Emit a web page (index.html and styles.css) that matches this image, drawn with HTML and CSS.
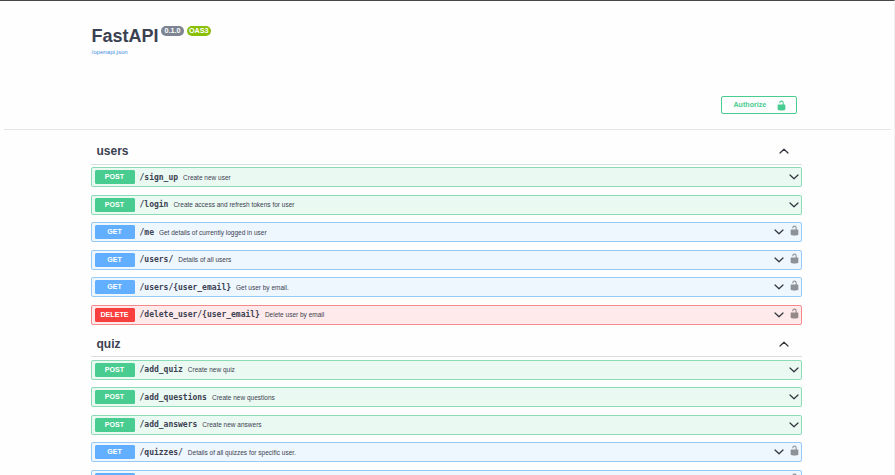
FILE: index.html
```html
<!DOCTYPE html>
<html lang="en">
<head>
<meta charset="utf-8">
<title>FastAPI - Swagger UI</title>
<link rel="stylesheet" href="styles.css">
</head>
<body>
<svg class="defs" aria-hidden="true">
  <symbol id="lock" viewBox="0 0 20 20"><path d="M15.8 8H14V5.6C14 2.703 12.665 1 10 1 7.334 1 6 2.703 6 5.6V6h2v-.801C8 3.754 8.797 3 10 3c1.203 0 2 .754 2 2.199V8H4c-.553 0-1 .646-1 1.199V17c0 .549.428 1.139.951 1.307l1.197.387C5.672 18.861 6.55 19 7.1 19h5.8c.549 0 1.428-.139 1.951-.307l1.196-.387c.524-.167.953-.757.953-1.306V9.199C17 8.646 16.352 8 15.8 8z"/></symbol>
  <symbol id="down" viewBox="0 0 10 10"><path d="M1 3 5 6.8 9 3" fill="none" stroke="currentColor" stroke-width="1.2" stroke-linecap="round" stroke-linejoin="round"/></symbol>
</svg>
<header class="info">
  <h1 class="title">FastAPI<span class="version">0.1.0</span><span class="version oas">OAS3</span></h1>
  <a class="spec">/openapi.json</a>
</header>
<div class="schemes"><button class="authorize">Authorize<svg><use href="#lock"/></svg></button></div>
<main class="wrapper">
  <section class="group">
    <h2 class="tag">users<svg class="arrow up"><use href="#down"/></svg></h2>
    <div class="op post"><span class="method">POST</span><span class="path">/sign_up</span><span class="desc">Create new user</span><svg class="arrow"><use href="#down"/></svg></div>
    <div class="op post"><span class="method">POST</span><span class="path">/login</span><span class="desc">Create access and refresh tokens for user</span><svg class="arrow"><use href="#down"/></svg></div>
    <div class="op get"><span class="method">GET</span><span class="path">/me</span><span class="desc">Get details of currently logged in user</span><svg class="arrow"><use href="#down"/></svg><svg class="lock"><use href="#lock"/></svg></div>
    <div class="op get"><span class="method">GET</span><span class="path">/users/</span><span class="desc">Details of all users</span><svg class="arrow"><use href="#down"/></svg><svg class="lock"><use href="#lock"/></svg></div>
    <div class="op get"><span class="method">GET</span><span class="path">/users/{user_email}</span><span class="desc">Get user by email.</span><svg class="arrow"><use href="#down"/></svg><svg class="lock"><use href="#lock"/></svg></div>
    <div class="op delete"><span class="method">DELETE</span><span class="path">/delete_user/{user_email}</span><span class="desc">Delete user by email</span><svg class="arrow"><use href="#down"/></svg><svg class="lock"><use href="#lock"/></svg></div>
  </section>
  <section class="group">
    <h2 class="tag">quiz<svg class="arrow up"><use href="#down"/></svg></h2>
    <div class="op post"><span class="method">POST</span><span class="path">/add_quiz</span><span class="desc">Create new quiz</span><svg class="arrow"><use href="#down"/></svg></div>
    <div class="op post"><span class="method">POST</span><span class="path">/add_questions</span><span class="desc">Create new questions</span><svg class="arrow"><use href="#down"/></svg></div>
    <div class="op post"><span class="method">POST</span><span class="path">/add_answers</span><span class="desc">Create new answers</span><svg class="arrow"><use href="#down"/></svg></div>
    <div class="op get"><span class="method">GET</span><span class="path">/quizzes/</span><span class="desc">Details of all quizzes for specific user.</span><svg class="arrow"><use href="#down"/></svg><svg class="lock"><use href="#lock"/></svg></div>
    <div class="op get"><span class="method"></span><svg class="arrow"><use href="#down"/></svg><svg class="lock"><use href="#lock"/></svg></div>
  </section>
</main>
</body>
</html>
```
FILE: styles.css
```css
* { box-sizing: border-box; }
body {
  margin: 0;
  height: 475px;
  overflow: hidden;
  border-top: 1px solid #48484b;
  border-right: 1px solid #f0f0f1;
  background: #fefefe;
  color: #3b4151;
  font-family: "Liberation Sans", Arial, sans-serif;
}
.defs { display: none; }
.info { height: 84px; padding: 24px 0 0 91.5px; }
.title {
  display: flex;
  align-items: flex-start;
  height: 22px;
  margin: 0;
  font-size: 18px;
  line-height: 22px;
}
.version {
  height: 10px;
  margin: 1px 0 0 2.7px;
  padding: 0 3.4px;
  border-radius: 5px;
  background: #7d8492;
  color: #fff;
  font-size: 7.2px;
  line-height: 10px;
}
.oas { padding: 0 2.2px; background: #89bf04; }
.spec {
  display: block;
  margin-top: 1px;
  color: #4990e2;
  font-size: 6.1px;
  line-height: 8px;
}
.schemes {
  display: flex;
  justify-content: flex-end;
  height: 44.5px;
  margin: 0 3px 0 4px;
  padding: 11px 94px 0 0;
  border-bottom: 1px solid #e4e5e6;
}
.authorize {
  display: flex;
  align-items: center;
  justify-content: space-between;
  width: 76px;
  height: 18px;
  padding: 0 9.5px 0 11.5px;
  border: 1px solid #49cc90;
  border-radius: 2px;
  background: transparent;
  color: #49cc90;
  font: bold 7.1px "Liberation Sans", Arial, sans-serif;
}
.authorize svg { width: 11px; height: 11px; fill: currentColor; }
.wrapper { width: 711px; margin: 9px 0 0 91px; }
.tag {
  display: flex;
  align-items: center;
  justify-content: space-between;
  height: 26px;
  margin: 0 0 2.5px;
  padding: 0 13px 0 5.5px;
  border-bottom: 1px solid #d8dfdc;
  font-size: 12px;
}
.arrow { flex: none; width: 10px; height: 10px; margin-left: auto; color: #30343c; }
.up { transform: rotate(180deg); }
.op {
  display: flex;
  align-items: center;
  height: 20px;
  margin-bottom: 7.5px;
  padding: 0 2.5px;
  border: 1px solid;
  border-radius: 2px;
}
.op:last-child { margin-bottom: 6.6px; }
.method {
  width: 40px;
  height: 14px;
  border-radius: 1.5px;
  color: #fff;
  font-size: 7.1px;
  font-weight: bold;
  line-height: 14px;
  text-align: center;
}
.path { margin-left: 5px; font: bold 8px "DejaVu Sans Mono", monospace; }
.desc { margin-left: 5px; font-size: 6.5px; }
.lock { width: 11px; height: 11px; margin: -3px -1px 0 5px; fill: #8d9298; }
.post { border-color: #8bdcb6; background: #ebf9f3; }
.post .method { background: #49cc90; }
.get { border-color: #98caf8; background: #eef6fe; }
.get .method { background: #61affe; }
.delete { border-color: #f58a8a; background: #feeaea; }
.delete .method { background: #f93e3e; }
.delete .lock { fill: #958989; }
```
